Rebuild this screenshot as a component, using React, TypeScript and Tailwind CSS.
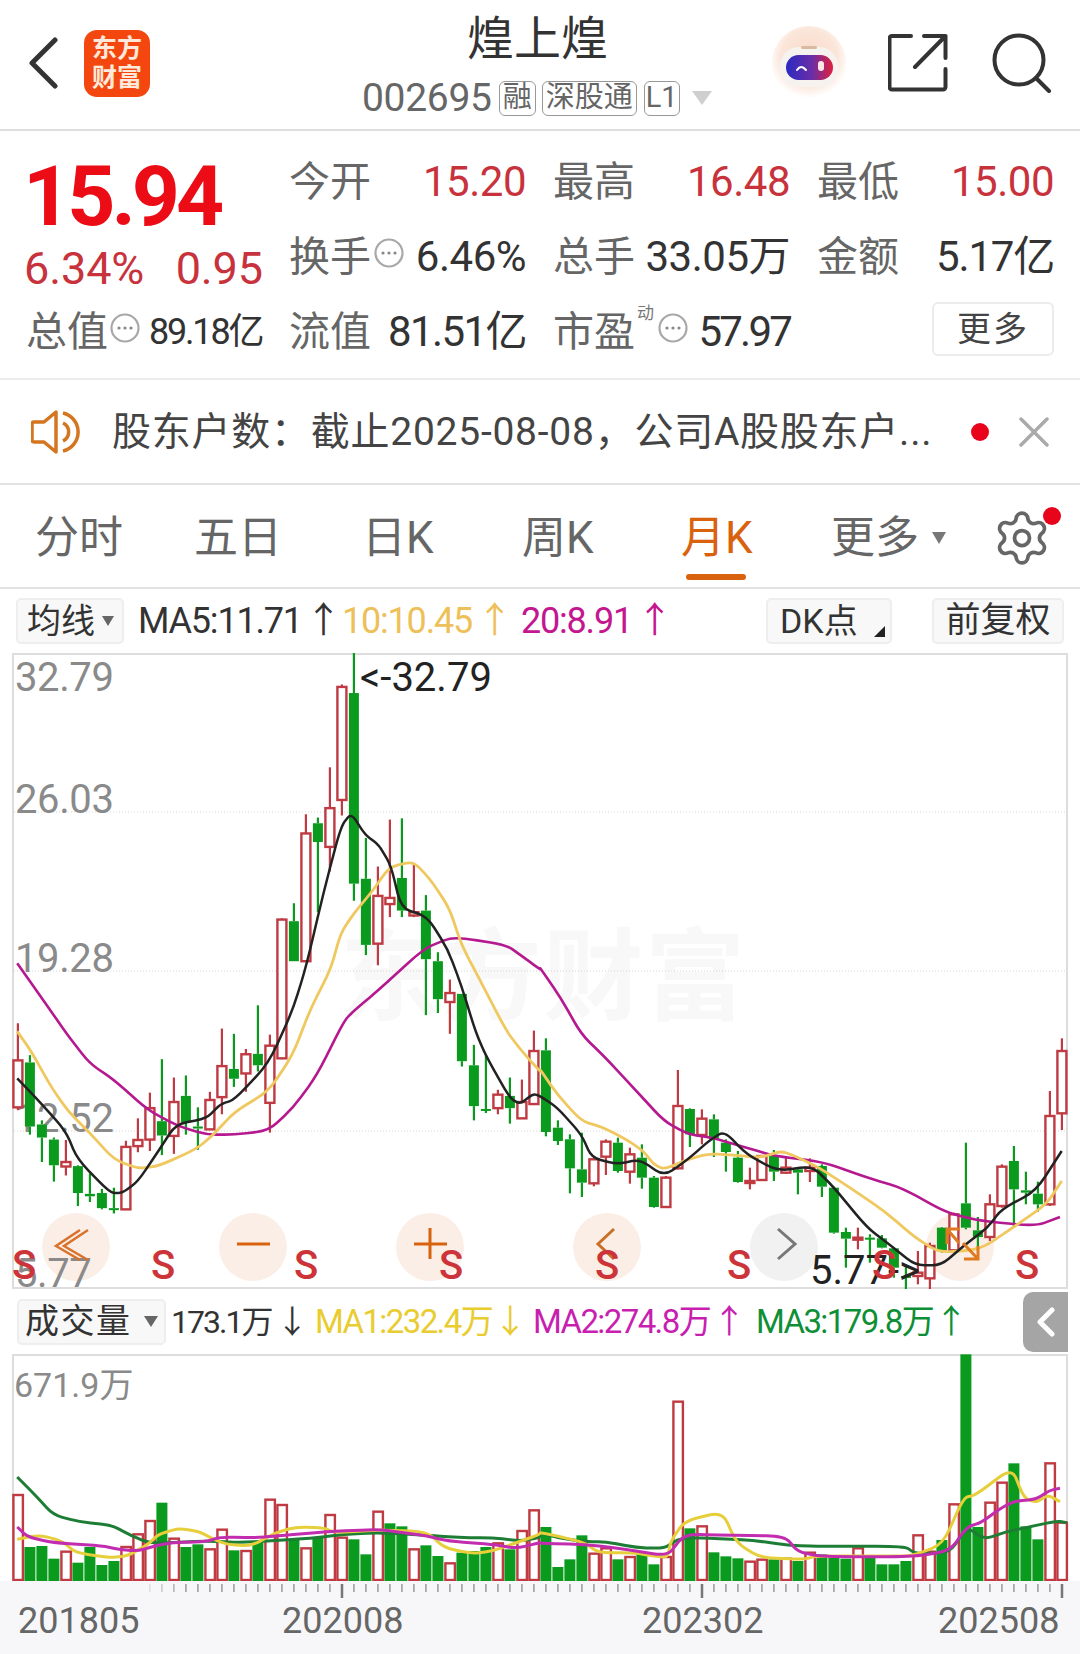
import { Settings } from "lucide-react";

const PAGE_FONT = "font-['Roboto','Noto_Sans_CJK_SC',sans-serif]";
const RED = "#bf3a42";
const GREEN = "#0a9a1e";

const xAt = (i: number) => 17.9 + 12 * i;

// candles read off the chart: [high, top, bottom, low, colour]
type Candle = [number, number, number, number, "r" | "g"];

const leftCandles: Candle[] = [
  [912, 1003, 1118, 1125, "r"], [990, 1008, 1165, 1185, "g"], [1150, 1160, 1192, 1252, "g"], [1192, 1197, 1260, 1300, "g"],
  [1198, 1252, 1263, 1285, "r"], [1260, 1262, 1328, 1360, "g"], [1280, 1330, 1336, 1350, "g"], [1318, 1328, 1365, 1368, "g"],
  [1315, 1365, 1367, 1378, "g"], [1200, 1215, 1368, 1368, "r"], [1145, 1198, 1213, 1228, "r"], [1082, 1120, 1197, 1225, "r"],
  [1000, 1152, 1187, 1235, "g"], [1045, 1105, 1188, 1232, "r"], [1040, 1090, 1155, 1185, "g"], [1118, 1165, 1170, 1222, "g"],
  [1080, 1100, 1172, 1172, "r"], [925, 1017, 1093, 1135, "r"], [938, 1024, 1048, 1068, "g"], [975, 988, 1035, 1080, "r"],
  [868, 987, 1015, 1030, "g"], [940, 967, 1107, 1180, "r"], [655, 658, 998, 1000, "r"], [618, 662, 760, 760, "g"],
  [400, 447, 760, 760, "r"], [408, 422, 468, 640, "g"], [285, 385, 480, 540, "r"], [82, 88, 365, 403, "r"],
  [5, 103, 570, 612, "g"], [458, 558, 720, 745, "g"], [528, 600, 717, 770, "r"], [413, 605, 620, 652, "r"],
  [410, 556, 636, 652, "g"], [520, 640, 648, 652, "r"], [598, 636, 755, 892, "g"], [738, 760, 853, 887, "g"],
  [805, 838, 860, 938, "r"], [840, 840, 1005, 1018, "g"], [965, 1015, 1115, 1150, "g"], [990, 1122, 1125, 1132, "g"],
  [1075, 1087, 1120, 1135, "r"], [1045, 1090, 1120, 1158, "g"], [1050, 1105, 1145, 1145, "r"], [930, 980, 1110, 1112, "r"],
];

const rightCandles: Candle[] = [
  [262, 298, 543, 556, "g"], [508, 530, 570, 582, "g"], [550, 565, 652, 727, "g"], [545, 655, 695, 738, "g"],
  [620, 625, 697, 706, "r"], [565, 572, 617, 672, "r"], [560, 575, 660, 665, "g"], [590, 610, 662, 698, "r"],
  [580, 620, 680, 713, "g"], [675, 680, 768, 770, "g"], [675, 680, 768, 768, "r"], [357, 465, 652, 655, "r"],
  [472, 474, 550, 588, "g"], [475, 503, 552, 580, "r"], [490, 505, 565, 618, "g"], [565, 575, 603, 662, "g"],
  [600, 620, 693, 695, "g"], [650, 690, 695, 715, "r"], [612, 615, 687, 690, "r"], [597, 612, 662, 690, "g"],
  [620, 650, 665, 668, "r"], [650, 655, 665, 730, "g"], [622, 650, 660, 693, "r"], [640, 645, 707, 738, "g"],
  [707, 710, 845, 848, "g"], [830, 843, 863, 950, "g"], [830, 860, 866, 895, "r"], [850, 860, 862, 935, "g"],
  [852, 862, 890, 892, "g"], [890, 892, 950, 980, "g"], [945, 975, 980, 1015, "g"], [900, 965, 975, 1000, "r"],
  [875, 885, 982, 1020, "r"], [828, 830, 898, 905, "g"], [785, 790, 898, 905, "r"], [575, 757, 830, 835, "g"],
  [798, 838, 858, 900, "g"], [730, 760, 858, 870, "r"], [640, 647, 765, 770, "r"], [585, 630, 715, 825, "g"],
  [662, 718, 725, 760, "g"], [692, 728, 760, 782, "g"], [420, 495, 760, 765, "r"], [262, 300, 487, 537, "r"],
];

const yLeft = (v: number) => 650 + v / 2.45;
const yRight = (v: number) => 950 + v / 3;

const candles: Candle[] = [
  ...leftCandles.map(([h, t, b, l, c]): Candle => [yLeft(h), yLeft(t), yLeft(b), yLeft(l), c]),
  ...rightCandles.map(([h, t, b, l, c]): Candle => [yRight(h), yRight(t), yRight(b), yRight(l), c]),
];

type Pt = [number, number];

const priceLine = (left: Pt[], right: Pt[]): Pt[] => [
  ...left.map(([x, y]): Pt => [x / 2.904, yLeft(y)]),
  ...right.map(([x, y]): Pt => [540 + x / 2.904, yRight(y)]),
];

const volLine = (left: Pt[], right: Pt[]): Pt[] => [
  ...left.map(([x, y]): Pt => [x / 2.904, 1290 + y / 3]),
  ...right.map(([x, y]): Pt => [540 + x / 2.904, 1290 + y / 3]),
];

// rounds the corners of a line through read-off points
const smooth = (pts: Pt[], amount = 0.35) => {
  let d = `M${pts[0][0]} ${pts[0][1]}`;
  for (let i = 1; i < pts.length - 1; i++) {
    const [px, py] = pts[i - 1];
    const [x, y] = pts[i];
    const [nx, ny] = pts[i + 1];
    const ax = x + (px - x) * amount;
    const ay = y + (py - y) * amount;
    const bx = x + (nx - x) * amount;
    const by = y + (ny - y) * amount;
    d += ` L${ax} ${ay} Q${x} ${y} ${bx} ${by}`;
  }
  const last = pts[pts.length - 1];
  return `${d} L${last[0]} ${last[1]}`;
};

const ma5 = priceLine(
  [[50, 1047], [110, 1100], [190, 1175], [225, 1245], [320, 1328], [355, 1328], [400, 1300], [460, 1225], [510, 1160], [600, 1145], [640, 1110], [680, 1100], [780, 1010], [850, 880], [890, 770], [940, 590], [990, 430], [1020, 397], [1060, 450], [1100, 475], [1135, 525], [1165, 630], [1240, 650], [1300, 730], [1340, 820], [1380, 930], [1410, 990], [1480, 1095], [1510, 1110], [1548, 1085]],
  [[0, 435], [50, 470], [120, 550], [150, 620], [225, 640], [290, 625], [360, 675], [430, 625], [490, 570], [535, 540], [600, 610], [690, 660], [790, 645], [850, 705], [950, 830], [1020, 885], [1090, 943], [1165, 943], [1230, 885], [1300, 830], [1340, 775], [1440, 720], [1515, 600]],
);

const ma10 = priceLine(
  [[50, 932], [90, 980], [150, 1070], [200, 1130], [260, 1180], [330, 1245], [400, 1268], [460, 1262], [570, 1220], [620, 1185], [680, 1130], [780, 1078], [850, 990], [900, 880], [960, 780], [990, 690], [1030, 640], [1080, 590], [1130, 530], [1200, 515], [1250, 560], [1305, 630], [1340, 720], [1390, 800], [1470, 930], [1510, 975], [1568, 1030]],
  [[0, 355], [50, 430], [120, 510], [180, 528], [250, 565], [300, 600], [330, 640], [360, 655], [430, 625], [490, 608], [560, 612], [640, 620], [700, 600], [740, 615], [810, 650], [900, 710], [1000, 780], [1090, 860], [1160, 905], [1280, 895], [1380, 825], [1470, 760], [1515, 690]],
);

const ma20 = priceLine(
  [[50, 765], [150, 885], [200, 945], [260, 1010], [330, 1050], [430, 1125], [520, 1165], [600, 1185], [680, 1185], [780, 1175], [850, 1120], [920, 1040], [1000, 905], [1030, 880], [1100, 830], [1230, 730], [1300, 705], [1340, 703], [1470, 720], [1520, 750], [1568, 780]],
  [[0, 50], [60, 140], [120, 250], [190, 320], [280, 420], [360, 510], [430, 550], [500, 560], [600, 590], [680, 615], [820, 632], [950, 680], [1050, 710], [1180, 785], [1280, 810], [1440, 825], [1510, 798]],
);

// volume bars: top of each bar in crop px, colour
const volumes: [number, "r" | "g"][] = [
  [612, "r"], [768, "g"], [765, "g"], [803, "g"], [782, "r"], [815, "g"], [768, "g"], [822, "g"], [810, "g"], [768, "r"], [730, "r"],
  [690, "r"], [635, "g"], [743, "r"], [768, "g"], [760, "g"], [775, "r"], [716, "r"], [778, "g"], [780, "r"], [750, "g"], [626, "r"],
  [642, "r"], [745, "g"], [772, "r"], [740, "g"], [672, "r"], [740, "r"], [745, "g"], [790, "g"], [662, "r"], [697, "g"], [706, "g"],
  [775, "r"], [763, "g"], [795, "g"], [817, "r"], [785, "g"], [780, "g"], [768, "g"], [757, "r"], [775, "g"], [720, "r"], [658, "r"],
  [708, "g"], [828, "g"], [805, "g"], [733, "g"], [788, "r"], [772, "r"], [805, "g"], [798, "r"], [790, "g"], [820, "g"], [798, "r"],
  [332, "r"], [712, "g"], [706, "r"], [784, "g"], [796, "g"], [802, "g"], [812, "r"], [806, "r"], [805, "g"], [803, "r"], [810, "g"],
  [785, "r"], [790, "g"], [800, "g"], [803, "g"], [772, "r"], [800, "g"], [820, "g"], [820, "g"], [810, "g"], [733, "r"], [782, "r"],
  [747, "g"], [640, "r"], [190, "g"], [708, "g"], [635, "r"], [575, "r"], [517, "g"], [706, "g"], [745, "g"], [517, "r"], [695, "r"],
];

const volMa1 = volLine(
  [[50, 745], [115, 732], [180, 750], [220, 785], [320, 800], [370, 795], [430, 760], [460, 730], [520, 712], [580, 722], [620, 745], [660, 760], [730, 765], [800, 725], [860, 708], [940, 710], [970, 725], [1100, 717], [1240, 722], [1290, 770], [1370, 788], [1430, 780], [1500, 755], [1568, 730]],
  [[0, 725], [50, 735], [130, 755], [170, 785], [270, 785], [320, 793], [370, 800], [380, 750], [420, 690], [530, 662], [570, 755], [640, 800], [770, 805], [800, 795], [1000, 795], [1080, 795], [1170, 760], [1230, 620], [1265, 612], [1370, 530], [1405, 620], [1440, 635], [1475, 612], [1510, 632]],
);

const volMa2 = volLine(
  [[50, 708], [80, 737], [150, 755], [300, 765], [345, 775], [400, 780], [450, 765], [500, 755], [600, 752], [640, 738], [750, 740], [800, 735], [950, 722], [1100, 715], [1170, 725], [1240, 735], [1300, 750], [1430, 760], [1500, 772], [1568, 755]],
  [[0, 757], [130, 760], [250, 775], [370, 795], [410, 742], [440, 730], [560, 733], [710, 735], [750, 783], [820, 797], [1080, 797], [1190, 780], [1240, 708], [1280, 695], [1340, 650], [1380, 630], [1440, 625], [1480, 598], [1510, 592]],
);

const volMa3 = volLine(
  [[50, 558], [100, 610], [155, 672], [230, 692], [325, 703], [380, 733], [430, 755], [500, 755], [600, 750], [700, 755], [800, 748], [900, 742], [1000, 730], [1100, 725], [1250, 733], [1330, 740], [1430, 740], [1510, 750], [1568, 740]],
  [[0, 725], [50, 740], [130, 752], [190, 752], [280, 770], [360, 772], [400, 745], [440, 740], [520, 743], [620, 748], [720, 763], [820, 766], [1060, 766], [1090, 788], [1190, 785], [1240, 708], [1290, 745], [1355, 722], [1420, 708], [1500, 690], [1530, 695]],
);

const axisLabels = [
  { x: 18, label: "201805" },
  { x: 282, label: "202008" },
  { x: 642, label: "202302" },
  { x: 938, label: "202508" },
];

const sellMarks = [24, 163, 306, 451, 607, 739, 884, 1027];

function DotsIcon() {
  return (
    <svg width="30" height="30" viewBox="0 0 30 30" className="shrink-0">
      <circle cx="15" cy="15" r="13.5" fill="none" stroke="#a8a8a8" strokeWidth="2.2" />
      <circle cx="9" cy="15" r="1.6" fill="#888" />
      <circle cx="15" cy="15" r="1.6" fill="#888" />
      <circle cx="21" cy="15" r="1.6" fill="#888" />
    </svg>
  );
}

function Avatar() {
  return (
    <svg width="75" height="75" viewBox="0 0 75 75">
      <defs>
        <radialGradient id="halo" cx="50%" cy="42%" r="55%">
          <stop offset="0%" stopColor="#f8d9c8" />
          <stop offset="70%" stopColor="#fbe6da" />
          <stop offset="100%" stopColor="#ffffff" />
        </radialGradient>
        <linearGradient id="visor" x1="0" y1="0" x2="1" y2="0">
          <stop offset="0%" stopColor="#2a2ac0" />
          <stop offset="55%" stopColor="#6a2ea8" />
          <stop offset="100%" stopColor="#e0203c" />
        </linearGradient>
      </defs>
      <circle cx="37" cy="37" r="37" fill="url(#halo)" />
      <rect x="8" y="21" width="58" height="40" rx="19" fill="#f6f2ef" />
      <rect x="29" y="20" width="16" height="3" rx="1.5" fill="#d9b9a0" />
      <rect x="14" y="29" width="47" height="25" rx="12.5" fill="url(#visor)" />
      <path d="M25 44 q4 -6 9 0" fill="none" stroke="#fff" strokeWidth="2" strokeLinecap="round" />
      <rect x="46" y="35" width="6" height="10" rx="3" fill="#ffe6e6" />
    </svg>
  );
}

function Header() {
  return (
    <header className="grid h-[131px] grid-cols-[362px_351px_367px] border-b-2 border-[#dedede]">
      <div className="flex items-center pb-[3px] pl-[27px]">
        <svg width="32" height="52" viewBox="0 0 32 52">
          <path d="M28 3 L5 26 L28 49" fill="none" stroke="#333" strokeWidth="5" strokeLinecap="round" strokeLinejoin="round" />
        </svg>
        <div className="ml-[25px] flex h-[67px] w-[66px] flex-col items-center justify-center rounded-[13px] bg-[#f3470f] text-[25px] font-bold leading-[29px] text-[#ffe9da]">
          <span>东方</span>
          <span>财富</span>
        </div>
      </div>
      <div className="flex flex-col items-center">
        <div className="mt-[9px] text-[47px] leading-[60px] text-[#333]">煌上煌</div>
        <div className="mt-[11px] flex w-full items-center">
          <span className="text-[39px] leading-[36px] tracking-[-0.3px] text-[#666]">002695</span>
          <span className="ml-[7px] flex h-[35px] w-[37px] items-center justify-center rounded-[6px] border border-[#999] text-[29px] text-[#666]">融</span>
          <span className="ml-[6px] flex h-[35px] w-[95px] items-center justify-center rounded-[6px] border border-[#999] text-[29px] text-[#666]">深股通</span>
          <span className="ml-[7px] flex h-[35px] w-[36px] items-center justify-center rounded-[6px] border border-[#999] text-[29px] text-[#666]">L1</span>
          <span className="ml-[12px] h-0 w-0 border-x-[10px] border-t-[14px] border-x-transparent border-t-[#cfcfcf]" />
        </div>
      </div>
      <div className="flex items-center pb-[3px] pl-[59px]">
        <Avatar />
        <svg width="60" height="60" viewBox="0 0 60 60" className="ml-[41px]">
          <path d="M23 3 H4 a2.5 2.5 0 0 0 -2.5 2.5 V54 a2.5 2.5 0 0 0 2.5 2.5 H55 a2.5 2.5 0 0 0 2.5 -2.5 V36" fill="none" stroke="#333" strokeWidth="4" strokeLinecap="round" />
          <path d="M36 3 H57.5 V25 M57.5 3 L27 34" fill="none" stroke="#333" strokeWidth="4" strokeLinecap="round" strokeLinejoin="round" />
        </svg>
        <svg width="60" height="60" viewBox="0 0 60 60" className="ml-[44px]">
          <circle cx="27" cy="27" r="24.5" fill="none" stroke="#333" strokeWidth="4" />
          <path d="M44 45 L57 58" fill="none" stroke="#333" strokeWidth="4" strokeLinecap="round" />
        </svg>
      </div>
    </header>
  );
}

function Label({ children }: { children: string }) {
  return <span className="text-[41px] leading-[50px] text-[#666]">{children}</span>;
}

function Value({ children, red, className }: { children: string; red?: boolean; className?: string }) {
  return (
    <span className={`text-[42px] leading-[50px] ${className ?? "tracking-[-0.5px]"} ${red ? "text-[#c8323c]" : "text-[#333]"}`}>
      {children}
    </span>
  );
}

function QuotePanel() {
  return (
    <section className="flex h-[249px] border-b-2 border-[#ececec] px-[26px]">
      <div className="w-[237px]">
        <div className="-ml-[3px] mt-[20px] h-[92px] text-[84px] font-bold leading-[92px] tracking-[-4px] text-[#ec0c16]">15.94</div>
        <div className="mt-[1px] flex h-[50px] items-center justify-between text-[45px] tracking-[-0.1px] text-[#c8323c]">
          <span className="-ml-[2px]">6.34%</span>
          <span>0.95</span>
        </div>
        <div className="mt-[13px] flex h-[50px] items-center">
          <Label>总值</Label>
          <span className="-mt-[8px] ml-[2px]">
            <DotsIcon />
          </span>
          <span className="ml-[9px] text-[36px] tracking-[-2.2px] text-[#333]">89.18亿</span>
        </div>
      </div>
      <div className="ml-[26px] grid w-[765px] grid-cols-3 grid-rows-[75px_75px_75px] gap-x-[27px] pt-[26px]">
        <div className="flex items-center justify-between self-start"><Label>今开</Label><Value red>15.20</Value></div>
        <div className="flex items-center justify-between self-start"><Label>最高</Label><Value red>16.48</Value></div>
        <div className="flex items-center justify-between self-start"><Label>最低</Label><Value red>15.00</Value></div>
        <div className="flex items-center self-start">
          <Label>换手</Label>
          <span className="-mt-[8px] ml-[3px]"><DotsIcon /></span>
          <span className="ml-auto"><Value>6.46%</Value></span>
        </div>
        <div className="flex items-center justify-between self-start"><Label>总手</Label><Value>33.05万</Value></div>
        <div className="flex items-center justify-between self-start"><Label>金额</Label><Value className="tracking-[-1.2px]">5.17亿</Value></div>
        <div className="flex items-center justify-between self-start"><Label>流值</Label><Value className="tracking-[-1.6px]">81.51亿</Value></div>
        <div className="flex items-center self-start">
          <Label>市盈</Label>
          <span className="-mt-[38px] ml-[2px] text-[17px] leading-[20px] text-[#777]">动</span>
          <span className="-mt-[8px] ml-[4px]"><DotsIcon /></span>
          <span className="ml-auto"><Value className="tracking-[-2.8px]">57.97</Value></span>
        </div>
        <div className="-mt-[5px] ml-[115px] flex h-[54px] items-center justify-center self-start rounded-[6px] border-2 border-[#ececec] text-[34px] tracking-[2px] text-[#444]">更多</div>
      </div>
    </section>
  );
}

function NoticeBar() {
  return (
    <section className="flex h-[105px] items-center border-b-2 border-[#e2e2e2] pl-[31px]">
      <svg width="50" height="46" viewBox="0 0 50 46">
        <path d="M3 13 H13 L25 3 V43 L13 33 H3 a2 2 0 0 1 -2 -2 V15 a2 2 0 0 1 2 -2 Z" fill="none" stroke="#d4751f" strokeWidth="3.5" strokeLinejoin="round" />
        <path d="M32 14 a10 10 0 0 1 0 18" fill="none" stroke="#d4751f" strokeWidth="3.5" />
        <path d="M32 4 a19.5 19.5 0 0 1 0 38" fill="none" stroke="#d4751f" strokeWidth="3.5" />
      </svg>
      <p className="ml-[31px] w-[832px] text-[39px] leading-[44px] tracking-[0.75px] text-[#444]">股东户数：截止2025-08-08，公司A股股东户...</p>
      <span className="ml-[27px] h-[18px] w-[18px] shrink-0 rounded-full bg-[#e8051c]" />
      <svg width="30" height="30" viewBox="0 0 30 30" className="ml-[30px]">
        <path d="M2 2 L28 28 M28 2 L2 28" fill="none" stroke="#aaa" strokeWidth="3.5" strokeLinecap="round" />
      </svg>
    </section>
  );
}

function Tabs() {
  const tabClass = "text-[44px] leading-[52px] text-[#666]";
  return (
    <nav className="flex h-[104px] items-center border-b-2 border-[#e2e2e2] pl-[35px] pt-[4px]">
      <span className={`${tabClass} w-[159px]`}>分时</span>
      <span className={`${tabClass} w-[168px]`}>五日</span>
      <span className={`${tabClass} w-[160px]`}>日K</span>
      <span className={`${tabClass} w-[159px]`}>周K</span>
      <span className="relative w-[150px] text-[44px] leading-[52px] text-[#d9620f]">
        月K
        <span className="absolute left-[5px] top-[62px] h-[6px] w-[60px] rounded-full bg-[#d9620f]" />
      </span>
      <span className={`${tabClass} w-[101px]`}>更多</span>
      <span className="h-0 w-0 border-x-[7px] border-t-[12px] border-x-transparent border-t-[#777]" />
      <span className="relative ml-[46px]">
        <Settings size={60} strokeWidth={1.5} color="#666" className="block" />
        <span className="absolute -right-[9px] -top-[1px] h-[18px] w-[18px] rounded-full bg-[#e8051c]" />
      </span>
    </nav>
  );
}

function IndicatorBar() {
  return (
    <section className="flex h-[64px] items-center px-[16px]">
      <div className="flex h-[46px] w-[108px] items-center justify-between rounded-[5px] border-2 border-[#eeeeee] bg-[#f8f8f8] pl-[9px] pr-[8px] text-[34px] text-[#333]">
        <span>均线</span>
        <span className="h-0 w-0 border-x-[6px] border-t-[10px] border-x-transparent border-t-[#666]" />
      </div>
      <span className="ml-[14px] w-[204px] text-[36px] tracking-[-1.2px] text-[#333] [word-spacing:-4px]">MA5:11.71 ↑</span>
      <span className="w-[179px] text-[36px] tracking-[-1.2px] text-[#eec05a] [word-spacing:-3px]">10:10.45 ↑</span>
      <span className="text-[36px] tracking-[-1.2px] text-[#c4168f] [word-spacing:-3px]">20:8.91 ↑</span>
      <div className="relative ml-auto flex h-[46px] w-[126px] items-center rounded-[5px] border-2 border-[#eeeeee] bg-[#f8f8f8] pl-[12px] text-[34px] text-[#333]">
        DK点
        <span className="absolute bottom-[5px] right-[5px] h-0 w-0 border-b-[11px] border-l-[11px] border-b-[#222] border-l-transparent" />
      </div>
      <div className="ml-[40px] flex h-[46px] w-[132px] items-center justify-center rounded-[5px] border-2 border-[#eeeeee] bg-[#f8f8f8] text-[35px] text-[#333]">前复权</div>
    </section>
  );
}

function PriceChart() {
  const labelFill = "#8a8a8a";
  return (
    <svg viewBox="0 652 1080 636" width="1080" height="636" className="block">
      <rect x="13" y="653" width="1054" height="634" fill="#fff" stroke="#dddddd" strokeWidth="2" />
      <text x="340" y="1011" fontSize="100" fontWeight="700" fill="#f8f8f8" textLength="405">东方财富</text>
      {[811, 970, 1130].map((y) => (
        <line key={y} x1="14" x2="1066" y1={y} y2={y} stroke="#d5d5d5" strokeWidth="1" strokeDasharray="1 2" />
      ))}

      {[76, 253, 430, 607, 960].map((cx) => (
        <circle key={cx} cx={cx} cy="1246" r="34" fill="#fbeee6" />
      ))}
      <circle cx="784" cy="1246" r="34" fill="#f1f1f1" />

      <text x="15" y="690" fontSize="40" letterSpacing="-0.4" fill={labelFill}>32.79</text>
      <text x="15" y="812" fontSize="40" letterSpacing="-0.4" fill={labelFill}>26.03</text>
      <text x="15" y="971" fontSize="40" letterSpacing="-0.4" fill={labelFill}>19.28</text>
      <text x="15" y="1131" fontSize="40" letterSpacing="-0.4" fill={labelFill}>12.52</text>
      <text x="15" y="1286" fontSize="40" letterSpacing="-0.4" fill={labelFill}>5.77</text>

      {candles.map(([h, t, b, l, c], i) => {
        const x = xAt(i);
        const stroke = c === "r" ? RED : GREEN;
        return (
          <g key={i}>
            <line x1={x} x2={x} y1={h} y2={t} stroke={stroke} strokeWidth="2.2" />
            <line x1={x} x2={x} y1={b} y2={l} stroke={stroke} strokeWidth="2.2" />
            {c === "r" ? (
              <rect x={x - 4.5} y={t} width="9" height={Math.max(b - t, 2)} fill="#fff" stroke={RED} strokeWidth="2.4" />
            ) : (
              <rect x={x - 5} y={t} width="10" height={Math.max(b - t, 2)} fill={GREEN} />
            )}
          </g>
        );
      })}

      <path d={smooth(ma20)} fill="none" stroke="#b5198f" strokeWidth="2.6" />
      <path d={smooth(ma10)} fill="none" stroke="#f0c860" strokeWidth="2.8" />
      <path d={smooth(ma5)} fill="none" stroke="#222" strokeWidth="2.5" />

      <text x="360" y="690" fontSize="40" fill="#222">&lt;-32.79</text>
      <text x="810" y="1283" fontSize="40" fill="#222">5.77-&gt;</text>

      <path d="M86 1230 L62 1246 L86 1260 M78 1230 L54 1246 L78 1260" transform="translate(2 -1)" fill="none" stroke="#d9722c" strokeWidth="2.5" />
      <line x1="237" x2="270" y1="1243" y2="1243" stroke="#d9620f" strokeWidth="3" />
      <path d="M414 1243 H447 M430 1227 V1258" fill="none" stroke="#d9620f" strokeWidth="3" />
      <path d="M614 1228 L598 1243 L614 1258" fill="none" stroke="#c8702a" strokeWidth="3" />
      <path d="M778 1228 L795 1243 L778 1258" fill="none" stroke="#777" strokeWidth="3" />
      <path d="M960 1228 H947 V1243 M947 1228 L959 1242 M964 1258 H978 V1245 M963 1242 L978 1258" fill="none" stroke="#e07a20" strokeWidth="3" />

      {sellMarks.map((x) => (
        <text key={x} x={x} y="1278" textAnchor="middle" fontSize="40" fontWeight="500" fill="#cc343a">S</text>
      ))}
    </svg>
  );
}

function VolumeBar() {
  return (
    <section className="flex h-[65px] items-center pl-[17px]">
      <div className="flex h-[46px] w-[149px] items-center rounded-[5px] border-2 border-[#eeeeee] bg-[#f8f8f8] pl-[6px] text-[34px] tracking-[1.5px] text-[#333]">
        成交量
        <span className="ml-[12px] h-0 w-0 border-x-[7px] border-t-[11px] border-x-transparent border-t-[#666]" />
      </div>
      <span className="ml-[5px] w-[144px] text-[32px] tracking-[-2px] text-[#333] [word-spacing:-1px]">173.1万 ↓</span>
      <span className="w-[218px] text-[33px] tracking-[-1.6px] text-[#e8cc30] [word-spacing:-5px]">MA1:232.4万 ↓</span>
      <span className="w-[223px] text-[33px] tracking-[-1.6px] text-[#c81fb0] [word-spacing:-4px]">MA2:274.8万 ↑</span>
      <span className="text-[33px] tracking-[-1.6px] text-[#0e8f36] [word-spacing:-5px]">MA3:179.8万 ↑</span>
      <span className="ml-auto mr-[12px] flex h-[60px] w-[45px] items-center justify-center rounded-l-[10px] bg-[#a5a5a5]">
        <svg width="20" height="30" viewBox="0 0 20 30">
          <path d="M16 3 L4 15 L16 27" fill="none" stroke="#fff" strokeWidth="5" strokeLinecap="round" strokeLinejoin="round" />
        </svg>
      </span>
    </section>
  );
}

function VolumeChart() {
  return (
    <svg viewBox="0 1353 1080 227" width="1080" height="227" className="block">
      <rect x="13" y="1354" width="1054" height="230" fill="#fff" stroke="#dddddd" strokeWidth="2" />
      <text x="14" y="1396" fontSize="34" fill="#8a8a8a">671.9万</text>
      {volumes.map(([top, c], i) => {
        const y = 1290 + top / 3;
        const x = xAt(i);
        return c === "r" ? (
          <rect key={i} x={x - 4.5} y={y} width="9.5" height={1579 - y} fill="#fff" stroke={RED} strokeWidth="2.4" />
        ) : (
          <rect key={i} x={x - 5.5} y={y} width="11" height={1580 - y} fill={GREEN} />
        );
      })}
      <path d={smooth(volMa3)} fill="none" stroke="#1d7d35" strokeWidth="3" />
      <path d={smooth(volMa1)} fill="none" stroke="#e6cf3a" strokeWidth="3" />
      <path d={smooth(volMa2)} fill="none" stroke="#c22db0" strokeWidth="3" />
    </svg>
  );
}

function TimeAxis() {
  const ticks = Array.from({ length: 77 }, (_, i) => xAt(i + 11));
  return (
    <svg viewBox="0 1580 1080 74" width="1080" height="74" className="block bg-[#f7f7f9]">
      {ticks.map((x, i) => (
        <line key={x} x1={x} x2={x} y1="1583" y2="1591" stroke="#9a9a9a" strokeWidth="1.5" opacity={Math.min(1, (i + 1) / 4)} />
      ))}
      {[342, 702, 1062].map((x) => (
        <line key={x} x1={x} x2={x} y1="1583" y2="1597" stroke="#777" strokeWidth="2.5" />
      ))}
      {axisLabels.map(({ x, label }) => (
        <text key={label} x={x} y="1632" fontSize="36" fill="#666">{label}</text>
      ))}
    </svg>
  );
}

export default function App() {
  return (
    <div className={`h-[1654px] w-[1080px] overflow-hidden whitespace-nowrap bg-white ${PAGE_FONT}`}>
      <Header />
      <QuotePanel />
      <NoticeBar />
      <Tabs />
      <IndicatorBar />
      <PriceChart />
      <VolumeBar />
      <VolumeChart />
      <TimeAxis />
    </div>
  );
}
